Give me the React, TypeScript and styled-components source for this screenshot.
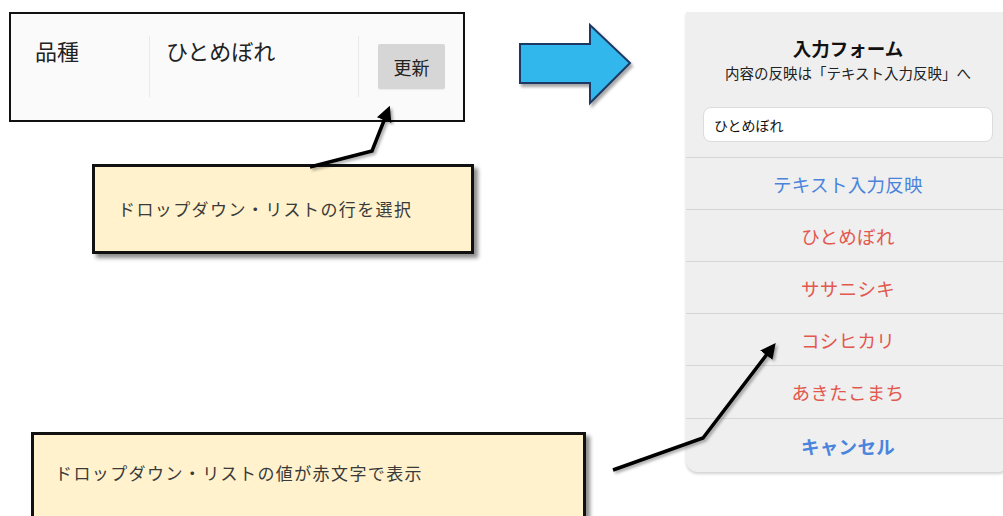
import {ReactElement} from "react";
import styled, {createGlobalStyle} from "styled-components";

const GlobalStyle = createGlobalStyle`
    html, body {
        margin: 0;
        padding: 0;
        background: #ffffff;
    }
    body {
        font-family: "Noto Sans CJK JP", "Noto Sans", sans-serif;
    }
`;

const StyledPage = styled.div`
    position: relative;
    display: flex;
    width: 1003px;
    height: 516px;
    overflow: hidden;
`;

const StyledLeft = styled.div`
    display: flex;
    flex-direction: column;
    align-items: flex-start;
    width: 686px;
    flex-shrink: 0;
`;

const StyledTopRow = styled.div`
    display: flex;
    align-items: flex-start;
`;

const StyledTableBox = styled.div`
    display: flex;
    align-items: flex-start;
    box-sizing: border-box;
    width: 456px;
    height: 110px;
    margin: 12px 0 0 9px;
    padding-top: 22px;
    border: 2px solid #111;
    background: #fafafa;
`;

interface CellProps {
    width?: number;
    pad: number;
    divider?: boolean;
}

const StyledCell = styled.div<CellProps>`
    box-sizing: border-box;
    ${props => props.width ? `width: ${props.width}px;` : ""}
    height: 61px;
    padding-left: ${props => props.pad}px;
    border-right: ${props => props.divider ? "1px solid #e9e9e9" : "none"};
    font-size: 22px;
    line-height: 28px;
    color: #222;
`;

const StyledUpdateButton = styled.button`
    margin-top: 8px;
    width: 67px;
    height: 45px;
    border: none;
    border-radius: 2px;
    background: #d6d6d6;
    font-family: "Noto Sans CJK JP", sans-serif;
    font-size: 18px;
    color: #222;
    padding: 0;
    box-shadow: 0 1px 1px rgba(0, 0, 0, 0.06);
`;

const StyledBigArrow = styled.svg`
    margin: 20px 0 0 50px;
    overflow: visible;
`;

interface CalloutProps {
    left: number;
    top: number;
    width: number;
    height: number;
    centered?: boolean;
}

const StyledCallout = styled.div<CalloutProps>`
    box-sizing: border-box;
    display: flex;
    align-items: ${props => props.centered ? "center" : "flex-start"};
    width: ${props => props.width}px;
    height: ${props => props.height}px;
    margin: ${props => props.top}px 0 0 ${props => props.left}px;
    padding: ${props => props.centered ? "0 0 0 23px" : "26px 0 0 21px"};
    border: 3px solid #111;
    background: #fff2cc;
    box-shadow: 4px 4px 4px rgba(0, 0, 0, 0.45);
    font-size: 17px;
    letter-spacing: 1.4px;
    line-height: 24px;
    color: #3a3a3a;
    flex-shrink: 0;
`;

const StyledDialog = styled.div`
    box-sizing: border-box;
    display: flex;
    flex-direction: column;
    align-items: stretch;
    width: 324px;
    height: 460px;
    margin-top: 12px;
    flex-shrink: 0;
    background: #efefef;
    border-radius: 0 0 12px 12px;
    box-shadow: 0 2px 3px rgba(0, 0, 0, 0.18);
`;

const StyledDialogTitle = styled.div`
    margin-top: 24px;
    text-align: center;
    font-size: 18.5px;
    font-weight: 700;
    line-height: 24px;
    color: #111;
`;

const StyledDialogSub = styled.div`
    margin-top: 3px;
    text-align: center;
    font-size: 14.5px;
    line-height: 20px;
    color: #222;
`;

const StyledInput = styled.div`
    box-sizing: border-box;
    height: 35px;
    margin: 24px 17px 15px 17px;
    padding: 0 10px;
    display: flex;
    align-items: center;
    background: #fff;
    border: 1px solid #dcdcdc;
    border-radius: 8px;
    font-size: 14px;
    color: #111;
`;

interface RowProps {
    tone: "blue" | "red";
    bold?: boolean;
    size?: number;
}

const StyledRow = styled.div<RowProps>`
    display: flex;
    align-items: center;
    justify-content: center;
    height: ${props => props.size ?? 51}px;
    ${props => props.size === undefined ? "" : ""}
    border-top: 1px solid #d5d5d5;
    font-size: 18.5px;
    font-weight: ${props => props.bold ? 700 : 400};
    color: ${props => props.tone === "blue" ? "#4a84dc" : "#e2584e"};
    letter-spacing: 0.3px;
`;

const StyledLastRow = styled(StyledRow)`
    flex: 1;
    height: auto;
`;

const StyledOverlay = styled.svg`
    position: absolute;
    left: 0;
    top: 0;
    pointer-events: none;
`;

const varieties = ["ひとめぼれ", "ササニシキ", "コシヒカリ", "あきたこまち"];

const App = (): ReactElement => {
    return (
        <StyledPage>
            <GlobalStyle/>
            <StyledLeft>
                <StyledTopRow>
                    <StyledTableBox>
                        <StyledCell width={139} pad={24} divider>品種</StyledCell>
                        <StyledCell width={209} pad={16} divider>ひとめぼれ</StyledCell>
                        <StyledCell pad={19}>
                            <StyledUpdateButton>更新</StyledUpdateButton>
                        </StyledCell>
                    </StyledTableBox>
                    <StyledBigArrow width="118" height="88" viewBox="515 20 118 88">
                        <defs>
                            <filter id="bigShadow" x="-20%" y="-20%" width="150%" height="150%">
                                <feDropShadow dx="2" dy="3" stdDeviation="1.6" floodColor="#000" floodOpacity="0.35"/>
                            </filter>
                        </defs>
                        <polygon
                            points="520,44 590,44 590,25 630,63 590,103 590,83 520,83"
                            fill="#33b7ec"
                            stroke="#1f3864"
                            strokeWidth="2"
                            strokeLinejoin="miter"
                            filter="url(#bigShadow)"
                        />
                    </StyledBigArrow>
                </StyledTopRow>
                <StyledCallout left={92} top={42} width={382} height={90} centered>
                    ドロップダウン・リストの行を選択
                </StyledCallout>
                <StyledCallout left={31} top={178} width={555} height={110}>
                    ドロップダウン・リストの値が赤文字で表示
                </StyledCallout>
            </StyledLeft>
            <StyledDialog>
                <StyledDialogTitle>入力フォーム</StyledDialogTitle>
                <StyledDialogSub>内容の反映は「テキスト入力反映」へ</StyledDialogSub>
                <StyledInput>ひとめぼれ</StyledInput>
                <StyledRow tone="blue">テキスト入力反映</StyledRow>
                {varieties.map((name, i) => (
                    <StyledRow key={name} tone="red" size={i === 3 ? 52 : 51}>{name}</StyledRow>
                ))}
                <StyledLastRow tone="blue" bold>キャンセル</StyledLastRow>
            </StyledDialog>
            <StyledOverlay width="1003" height="516" viewBox="0 0 1003 516">
                <defs>
                    <marker id="head" viewBox="0 0 10 10" refX="5" refY="5" markerWidth="4.4" markerHeight="4.4" orient="auto">
                        <path d="M0,0 L10,5 L0,10 z" fill="#000"/>
                    </marker>
                    <filter id="lineShadow" x="-20%" y="-20%" width="150%" height="150%">
                        <feDropShadow dx="2" dy="2" stdDeviation="1.5" floodColor="#000" floodOpacity="0.35"/>
                    </filter>
                </defs>
                <polyline
                    points="310,167 372,151 387,113"
                    fill="none"
                    stroke="#000"
                    strokeWidth="3.5"
                    strokeLinejoin="miter"
                    markerEnd="url(#head)"
                    filter="url(#lineShadow)"
                />
                <polyline
                    points="613,470 703,438 771,349"
                    fill="none"
                    stroke="#000"
                    strokeWidth="3.5"
                    strokeLinejoin="miter"
                    markerEnd="url(#head)"
                    filter="url(#lineShadow)"
                />
            </StyledOverlay>
        </StyledPage>
    );
};

export default App;
